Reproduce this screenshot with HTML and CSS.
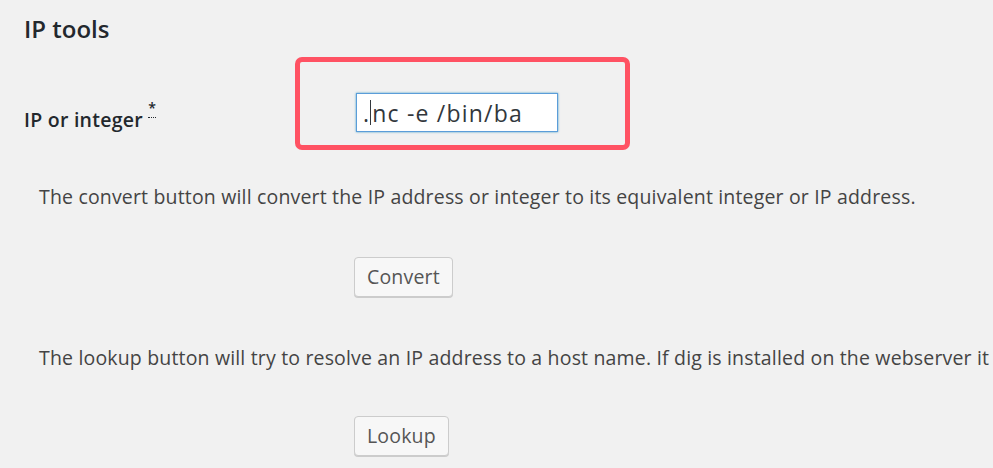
FILE: index.html
```html
<!DOCTYPE html>
<html>
<head>
<meta charset="utf-8">
<link rel="stylesheet" href="styles.css">
</head>
<body>
<div class="wrap">
  <h2 class="title">IP tools</h2>
  <div class="field-row">
    <div class="label-col"><label class="field-label">IP or integer <abbr class="req" title="required">*</abbr></label></div>
    <div class="input-col">
      <div class="highlight"></div>
      <div class="fake-input"><span>.</span><span class="caret"></span><span>nc -e /bin/ba</span></div>
    </div>
  </div>
  <p class="desc">The convert button will convert the IP address or integer to its equivalent integer or IP address.</p>
  <div class="actions"><button class="btn">Convert</button></div>
  <p class="desc desc-2">The lookup button will try to resolve an IP address to a host name. If dig is installed on the webserver it</p>
  <div class="actions actions-2"><button class="btn">Lookup</button></div>
</div>
</body>
</html>
```
FILE: styles.css
```css
html, body {
  margin: 0;
  padding: 0;
  background: #f1f1f1;
  overflow: hidden;
}
body {
  width: 993px;
  height: 468px;
  font-family: "Open Sans", "Noto Sans", sans-serif;
  color: #444;
}
.wrap {
  padding-left: 24px;
  white-space: nowrap;
}
.title {
  margin: 14px 0 0;
  font-size: 24px;
  line-height: 30px;
  font-weight: 600;
  color: #23282d;
}
.field-row {
  display: flex;
  align-items: center;
  margin-top: 49px;
  height: 39px;
}
.label-col {
  width: 332px;
  flex: none;
  padding-top: 14px;
}
.field-label {
  font-size: 19.5px;
  font-weight: 600;
  letter-spacing: 0.25px;
  color: #23282d;
}
.req {
  position: relative;
  top: -14px;
  font-size: 14px;
  text-decoration: none;
  border-bottom: 1px dotted #23282d;
  line-height: 1;
}
.input-col {
  position: relative;
}
.highlight {
  position: absolute;
  left: -61px;
  top: -36px;
  width: 335px;
  height: 93px;
  box-sizing: border-box;
  border: 5.5px solid #ff5263;
  border-radius: 7px;
}
.fake-input {
  box-sizing: border-box;
  width: 202px;
  height: 39px;
  background: #fff;
  border: 1px solid #5b9dd9;
  box-shadow: 0 0 2px rgba(30, 140, 190, 0.8);
  font-size: 23px;
  letter-spacing: 1.2px;
  color: #32373c;
  padding-left: 6px;
  display: flex;
  align-items: center;
}
.caret {
  display: inline-block;
  width: 1px;
  height: 25px;
  background: #32373c;
  margin: 0 1px 0 0;
}
.desc {
  margin: 50px 0 0 15px;
  font-size: 19.5px;
  letter-spacing: 0.17px;
  line-height: 30px;
  color: #444;
}
.actions {
  margin-top: 45px;
  padding-left: 330px;
}
.btn {
  font-family: inherit;
  font-size: 19.5px;
  letter-spacing: 0.17px;
  color: #555;
  background: #f7f7f7;
  border: 1px solid #ccc;
  box-shadow: 0 1px 0 #ccc;
  border-radius: 4px;
  height: 40px;
  padding: 0 12px;
  line-height: 38px;
}
.desc-2 { margin-top: 46px; }
.actions-2 { margin-top: 43px; }
```
